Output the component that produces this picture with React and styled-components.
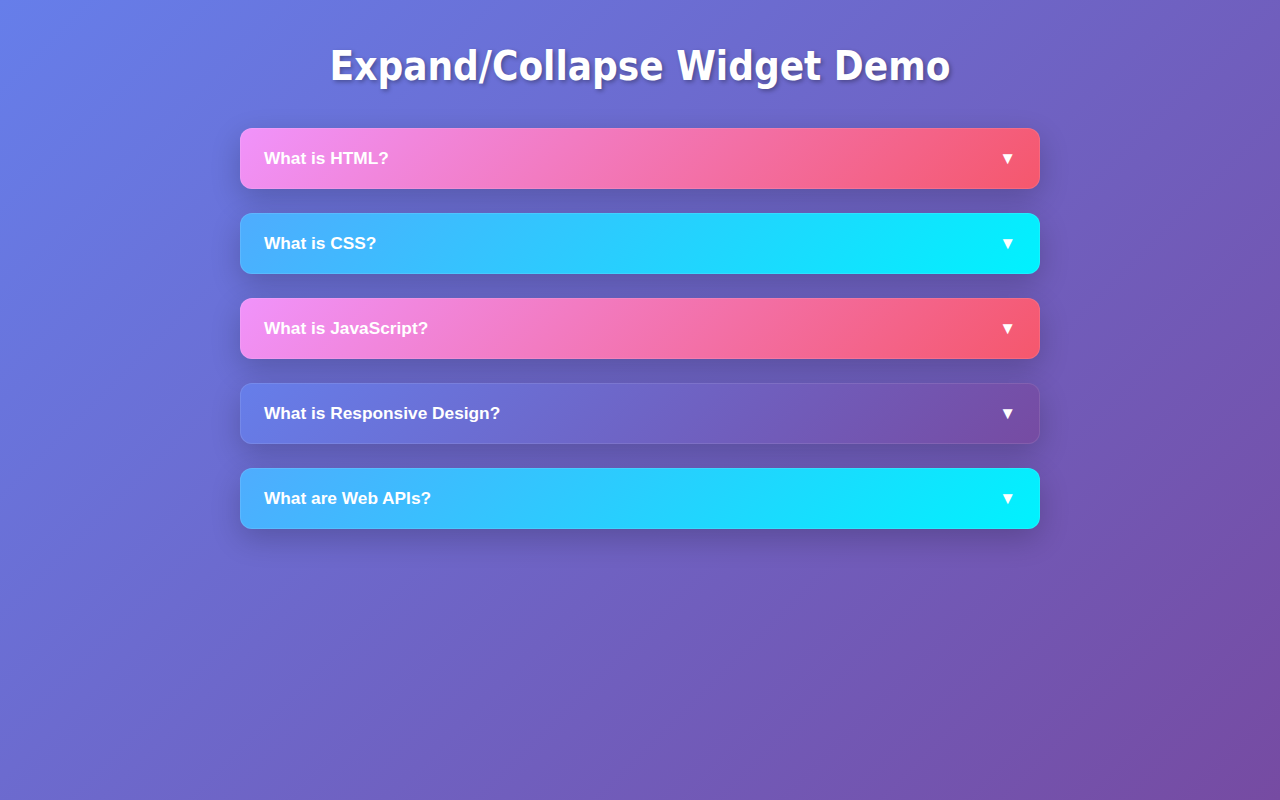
import styled, { createGlobalStyle } from 'styled-components';

const GlobalStyle = createGlobalStyle`
  html, body {
    margin: 0;
    min-height: 100%;
  }
  body {
    min-height: 800px;
    background: linear-gradient(135deg, #667eea 0%, #764ba2 100%);
    font-family: "Liberation Sans", Arial, sans-serif;
  }
`;

const Page = styled.div`
  padding: 40px 20px;
`;

const Title = styled.h1`
  margin: 0 0 36px;
  text-align: center;
  color: #fff;
  font-family: "DejaVu Sans Condensed", "DejaVu Sans", Verdana, sans-serif;
  font-size: 40px;
  font-weight: bold;
  line-height: 52px;
  text-shadow: 2px 2px 4px rgba(0, 0, 0, 0.3);
`;

const List = styled.div`
  max-width: 800px;
  margin: 0 auto;
  display: flex;
  flex-direction: column;
  gap: 24px;
`;

const gradients = {
  pink: 'linear-gradient(135deg, #f093fb 0%, #f5576c 100%)',
  cyan: 'linear-gradient(135deg, #4facfe 0%, #00f2fe 100%)',
  purple: 'linear-gradient(135deg, #667eea 0%, #764ba2 100%)',
};

const Item = styled.div`
  border-radius: 12px;
  border: 1px solid rgba(255, 255, 255, 0.1);
  background: ${(p) => gradients[p.$tone]} border-box;
  box-shadow: 0 10px 30px rgba(0, 0, 0, 0.2);
  overflow: hidden;
`;

const Header = styled.button`
  width: 100%;
  display: flex;
  align-items: center;
  justify-content: space-between;
  padding: 19px 24px 19px 23px;
  border: none;
  background: transparent;
  color: #fff;
  font-family: "Liberation Sans", Arial, sans-serif;
  font-size: 17.3px;
  font-weight: bold;
  line-height: 21px;
  cursor: pointer;
  text-align: left;
`;

const Arrow = styled.span`
  font-size: 17px;
  margin-right: -1px;
`;

const items = [
  { q: 'What is HTML?', tone: 'pink' },
  { q: 'What is CSS?', tone: 'cyan' },
  { q: 'What is JavaScript?', tone: 'pink' },
  { q: 'What is Responsive Design?', tone: 'purple' },
  { q: 'What are Web APIs?', tone: 'cyan' },
];

export default function App() {
  return (
    <>
      <GlobalStyle />
      <Page>
        <Title>Expand/Collapse Widget Demo</Title>
        <List>
          {items.map((it) => (
            <Item key={it.q} $tone={it.tone}>
              <Header>
                <span>{it.q}</span>
                <Arrow>▼</Arrow>
              </Header>
            </Item>
          ))}
        </List>
      </Page>
    </>
  );
}
